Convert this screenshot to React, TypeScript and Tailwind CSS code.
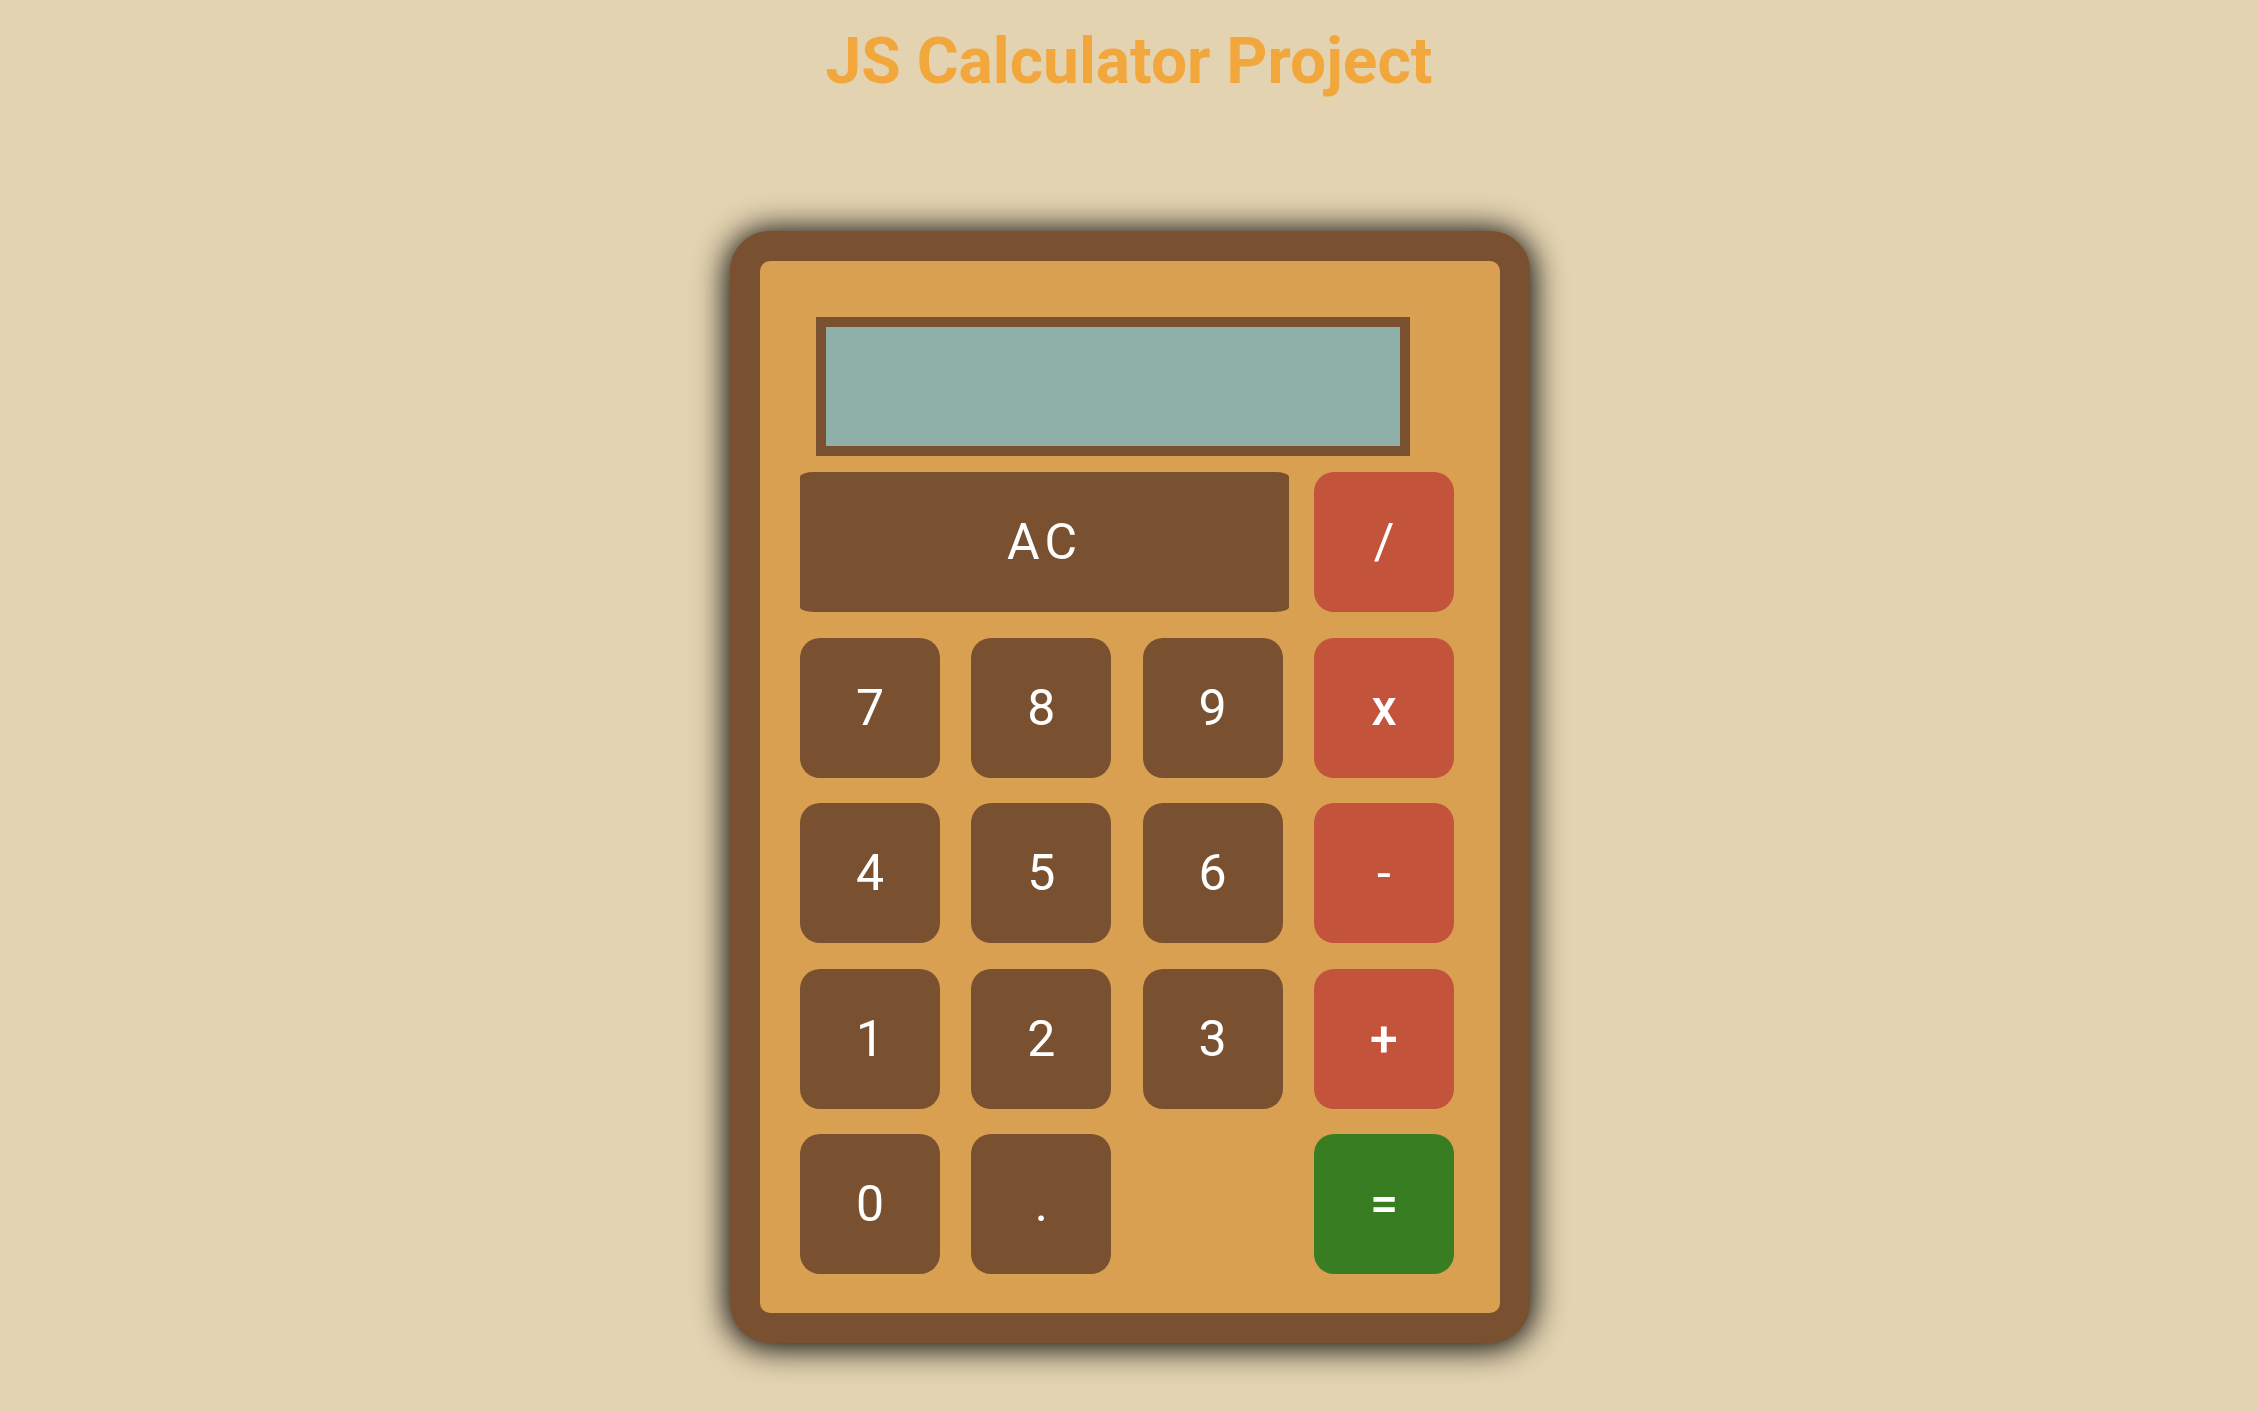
import * as React from "react";

const digitKey =
  "flex items-center justify-center w-[140px] h-[140px] rounded-[20px] bg-[#7a5130] text-white text-[50px] leading-none";
const opKey =
  "flex items-center justify-center w-[140px] h-[140px] rounded-[20px] bg-[#c4533b] text-white text-[50px] leading-none";

export default function App() {
  // rows under the AC key; null leaves an empty cell
  const rows: (string | null)[][] = [
    ["7", "8", "9", "x"],
    ["4", "5", "6", "-"],
    ["1", "2", "3", "+"],
    ["0", ".", null, "="],
  ];

  return (
    <div className="min-h-screen bg-[#e3d3b1] pb-[60px] font-['Roboto',sans-serif] overflow-hidden">
      <h1 className="pt-[24px] text-center text-[64px] font-bold leading-[75px] text-[#f2a73c]">
        JS Calculator Project
      </h1>

      <div className="mx-auto mt-[132px] w-[800px] translate-x-[1px] rounded-[40px] border-[30px] border-[#7a5130] bg-[#d9a052] pt-[56px] pb-[39px] shadow-[0_2px_32px_3px_#000]">
        <div className="ml-[56px] h-[139px] w-[594px] border-[10px] border-[#7a5130] bg-[#8fb0a8]" />

        <div className="mt-[16px] ml-[40px] flex flex-col gap-y-[25.5px]">
          <div className="flex">
            <button className="flex h-[140px] w-[489px] items-center justify-center rounded-[14px/5px] bg-[#7a5130] text-[50px] leading-none tracking-[0.1em] text-white">
              AC
            </button>
            <button className={opKey + " ml-[25px]"}>/</button>
          </div>

          {rows.map((row, i) => (
            <div key={i} className="flex gap-x-[31.33px]">
              {row.map((key, j) => {
                if (key === null) return <div key={j} className="w-[140px] h-[140px]" />;
                if (key === "=")
                  return (
                    <button
                      key={j}
                      className="flex items-center justify-center w-[140px] h-[140px] rounded-[20px] bg-[#387d22] text-white text-[50px] font-medium leading-none"
                    >
                      =
                    </button>
                  );
                return (
                  <button
                    key={j}
                    className={j === 3 ? opKey + (key === "-" ? "" : " font-medium") : digitKey}
                  >
                    {key}
                  </button>
                );
              })}
            </div>
          ))}
        </div>
      </div>
    </div>
  );
}
